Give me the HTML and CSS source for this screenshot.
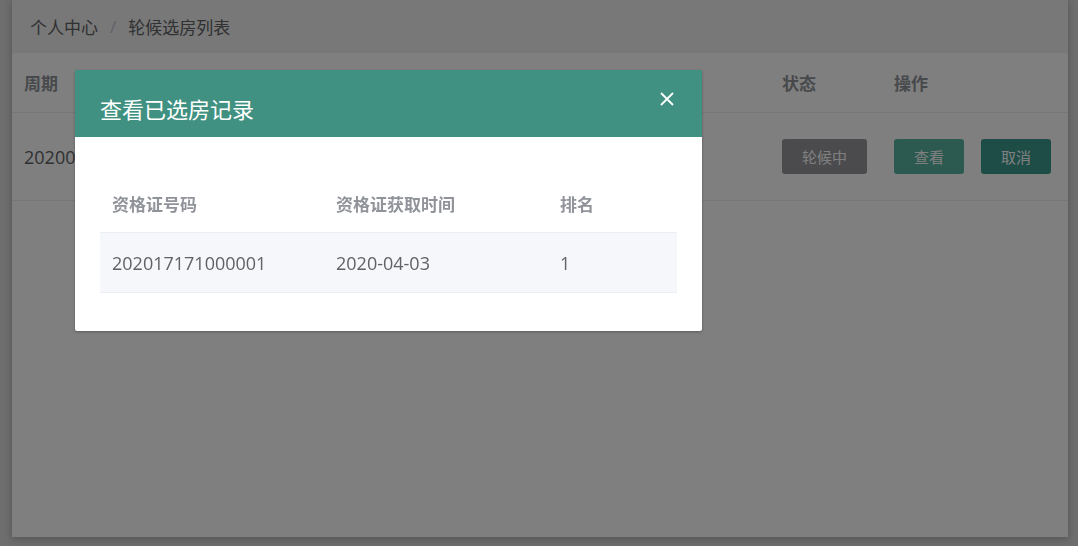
FILE: index.html
```html
<!DOCTYPE html>
<html lang="zh-CN">
  <head>
    <meta charset="UTF-8" />
    <title>轮候选房列表</title>
    <link rel="stylesheet" href="styles.css">
  </head>
  <body>
    <div class="page">
      <div class="breadcrumb">
        <span>个人中心</span>
        <span class="sep">/</span>
        <span>轮候选房列表</span>
      </div>
      <table class="list">
        <thead>
          <tr>
            <th class="col-period">周期</th>
            <th class="col-status">状态</th>
            <th class="col-action">操作</th>
          </tr>
        </thead>
        <tbody>
          <tr>
            <td class="col-period">202004</td>
            <td class="col-status"><button class="btn btn-info">轮候中</button></td>
            <td class="col-action"><button class="btn btn-view">查看</button><button class="btn btn-cancel">取消</button></td>
          </tr>
        </tbody>
      </table>
    </div>

    <div class="mask"></div>

    <div class="dialog">
      <div class="dialog-header">
        <span class="dialog-title">查看已选房记录</span>
        <svg class="dialog-close" width="14" height="14" viewBox="0 0 14 14">
          <path d="M1 1 L13 13 M13 1 L1 13" stroke="#fff" stroke-width="1.8" fill="none" />
        </svg>
      </div>
      <div class="dialog-body">
        <table class="record">
          <thead>
            <tr>
              <th class="c1">资格证号码</th>
              <th class="c2">资格证获取时间</th>
              <th>排名</th>
            </tr>
          </thead>
          <tbody>
            <tr>
              <td>202017171000001</td>
              <td>2020-04-03</td>
              <td>1</td>
            </tr>
          </tbody>
        </table>
      </div>
    </div>
  </body>
</html>
```

FILE: styles.css
```css
body {
  margin: 0;
  font-family: "Open Sans", "Noto Sans CJK SC", sans-serif;
  background-color: #dcdcdc;
  height: 546px;
  overflow: hidden;
}

.page {
  margin-left: 12px;
  width: 1056px;
  height: 537px;
  background-color: #fff;
  box-shadow: 0 2px 8px rgba(0, 0, 0, 0.25);
}

.breadcrumb {
  height: 53px;
  padding-left: 18px;
  background-color: #f0f0f0;
  display: flex;
  align-items: center;
  font-size: 17px;
  color: #606266;
}

.breadcrumb .sep {
  color: #c0c4cc;
  margin: 0 12px;
}

.list {
  width: 100%;
  border-collapse: collapse;
  font-size: 17px;
}

.list th {
  height: 59px;
  text-align: left;
  padding: 0 12px;
  color: #909399;
  font-weight: bold;
  border-bottom: 1px solid #ebeef5;
}

.list td {
  height: 87px;
  padding: 0 12px;
  color: #606266;
  border-bottom: 1px solid #ebeef5;
}

.list td.col-period {
  font-size: 18px;
}

.list .col-status {
  width: 88px;
}

.list .col-action {
  width: 162px;
  white-space: nowrap;
}

.btn {
  height: 35px;
  padding: 0;
  border: none;
  border-radius: 3px;
  color: #fff;
  font-family: "Noto Sans CJK SC", sans-serif;
  font-size: 15px;
  vertical-align: middle;
  cursor: pointer;
}

.btn-info {
  width: 85px;
  background-color: #96979c;
}

.btn-view {
  width: 70px;
  background-color: #58b4a2;
}

.btn-cancel {
  width: 70px;
  margin-left: 17px;
  background-color: #3a9b8d;
}

.mask {
  position: fixed;
  inset: 0;
  background-color: rgba(0, 0, 0, 0.5);
}

.dialog {
  position: fixed;
  left: 75px;
  top: 70px;
  width: 627px;
  background-color: #fff;
  border-radius: 2px;
  box-shadow: 0 1px 3px rgba(0, 0, 0, 0.3);
}

.dialog-header {
  height: 67px;
  background-color: #409181;
  display: flex;
  align-items: center;
  justify-content: space-between;
  padding: 0 28px 0 25px;
  color: #fff;
}

.dialog-title {
  font-size: 22px;
  padding-top: 8px;
}

.dialog-close {
  margin-top: -9px;
}

.dialog-body {
  padding: 38px 25px;
}

.record {
  width: 100%;
  border-collapse: collapse;
  font-size: 17px;
}

.record th {
  height: 57px;
  padding: 0 12px;
  text-align: left;
  color: #909399;
  font-weight: bold;
  border-bottom: 1px solid #ebeef5;
}

.record td {
  height: 59px;
  padding: 0 12px;
  font-size: 18px;
  color: #606266;
  background-color: #f5f7fa;
  border-bottom: 1px solid #ebeef5;
}

.record .c1,
.record .c2 {
  width: 200px;
}
```
